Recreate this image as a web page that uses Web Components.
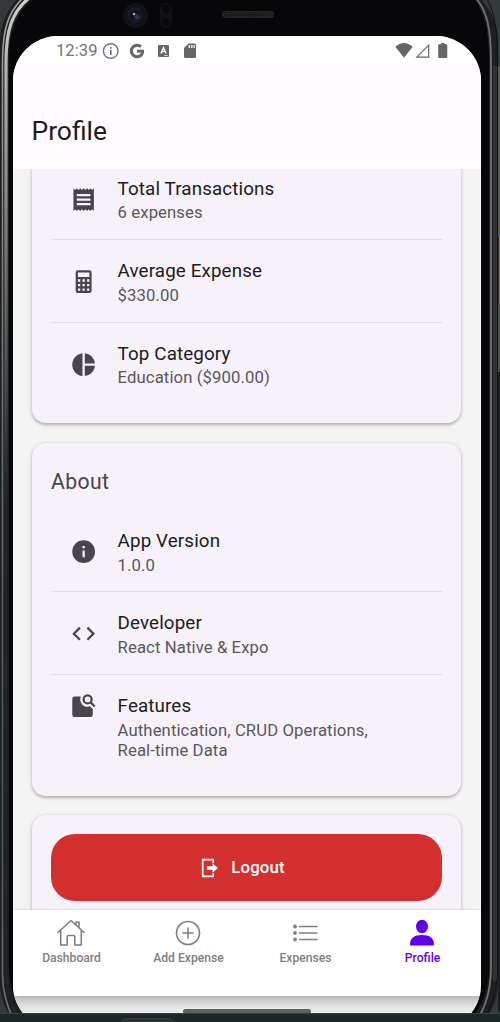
<!DOCTYPE html>
<html lang="en">
<head>
<meta charset="utf-8">
<title>Profile</title>
<style>
html,body{margin:0;padding:0;background:#343a3c;overflow:hidden}
body{width:500px;height:1022px;font-family:Roboto,"Noto Sans",sans-serif}
</style>
</head>
<body>
<phone-device>
  <status-bar></status-bar>
  <app-header>Profile</app-header>
  <scroll-view>
    <info-card style="--pt:0px;--h:265.5px;--mt:-11.5px">
      <list-row icon="receipt" heading="Total Transactions">6 expenses</list-row>
      <list-row icon="calculator" heading="Average Expense">$330.00</list-row>
      <list-row icon="pie" heading="Top Category" last>Education ($900.00)</list-row>
    </info-card>
    <info-card heading="About" style="--h:353px">
      <list-row icon="info" heading="App Version">1.0.0</list-row>
      <list-row icon="code" heading="Developer">React Native &amp; Expo</list-row>
      <list-row icon="search" heading="Features" last top>Authentication, CRUD Operations,<br>Real-time Data</list-row>
    </info-card>
    <info-card style="--h:140px">
      <logout-button>Logout</logout-button>
    </info-card>
  </scroll-view>
  <tab-bar>
    <tab-item icon="home">Dashboard</tab-item>
    <tab-item icon="add">Add Expense</tab-item>
    <tab-item icon="list">Expenses</tab-item>
    <tab-item icon="person" active>Profile</tab-item>
  </tab-bar>
  <gesture-bar></gesture-bar>
</phone-device>
<script>
const ICONS = {
  receipt: '<path d="M3,22L4.5,20.5L6,22L7.5,20.5L9,22L10.5,20.5L12,22L13.5,20.5L15,22L16.5,20.5L18,22L19.5,20.5L21,22V2L19.5,3.5L18,2L16.5,3.5L15,2L13.5,3.5L12,2L10.5,3.5L9,2L7.5,3.5L6,2L4.5,3.5L3,2M18,9H6V7H18M18,13H6V11H18M18,17H6V15H18V17Z"/>',
  calculator: '<path d="M7,2H17A2,2 0 0,1 19,4V20A2,2 0 0,1 17,22H7A2,2 0 0,1 5,20V4A2,2 0 0,1 7,2M7,4V8H17V4H7M7,10V12H9V10H7M11,10V12H13V10H11M15,10V12H17V10H15M7,14V16H9V14H7M11,14V16H13V14H11M15,14V16H17V14H15M7,18V20H9V18H7M11,18V20H13V18H11M15,18V20H17V18H15Z"/>',
  pie: '<path d="M11,2V22C5.9,21.5 2,17.2 2,12C2,6.8 5.9,2.5 11,2M13,2V11H22C21.5,6.2 17.8,2.5 13,2M13,13V22C17.7,21.5 21.5,17.8 22,13H13Z"/>',
  info: '<path d="M13,9H11V7H13M13,17H11V11H13M12,2A10,10 0 0,0 2,12A10,10 0 0,0 12,22A10,10 0 0,0 22,12A10,10 0 0,0 12,2Z"/>',
  code: '<path d="M14.6,16.6L19.2,12L14.6,7.4L16,6L22,12L16,18L14.6,16.6M9.4,16.6L4.8,12L9.4,7.4L8,6L2,12L8,18L9.4,16.6Z"/>',
  search: '<path d="M4,4H9.5A6.5,6.5 0 0 0 15.5,13A6.5,6.5 0 0 0 17.6,12.6L20,15V20A2,2 0 0 1 18,22H4A2,2 0 0 1 2,20V6A2,2 0 0 1 4,4Z"/><circle cx="15.5" cy="6.5" r="3.5" fill="none" stroke="currentColor" stroke-width="2"/><path d="M17.8,8.8L21.7,12.7" stroke="currentColor" stroke-width="2"/>'
};
function define(name, render) {
  customElements.define(name, class extends HTMLElement {
    connectedCallback() {
      if (this.shadowRoot) return;
      this.attachShadow({ mode: 'open' }).innerHTML = render(this);
    }
  });
}

define('phone-device', () => `
<style>
:host{position:relative;display:block;box-sizing:border-box;width:500px;height:1022px;padding:36px 19px 9px 13px;overflow:hidden}
.frame{position:absolute;left:0;top:0;z-index:0}
.clip{position:relative;height:977px;overflow:hidden}
.screen{width:468px;height:994px;border-radius:45px;overflow:hidden;display:flex;flex-direction:column;background:#f4f4f4}
</style>
<svg class="frame" width="500" height="1022" viewBox="0 0 500 1022">
  <defs><linearGradient id="metal" x1="0" y1="0" x2="0" y2="1"><stop offset="0" stop-color="#a0a2a2"/><stop offset=".3" stop-color="#777b7c"/><stop offset=".8" stop-color="#4b5356"/><stop offset="1" stop-color="#777"/></linearGradient>
  <linearGradient id="shine" x1="0" y1="0" x2="0" y2="1"><stop offset="0" stop-color="#cfcfcd"/><stop offset=".2" stop-color="#a8a8a6"/><stop offset=".5" stop-color="#777978"/><stop offset="1" stop-color="#1f2627"/></linearGradient>
  <pattern id="mesh" width="3" height="3" patternUnits="userSpaceOnUse"><rect width="3" height="3" fill="#262626"/><path d="M0 0L3 3M3 0L0 3" stroke="#111" stroke-width=".7"/></pattern></defs>
  <rect width="500" height="1022" fill="#343a3c"/>
  <rect x="498" y="67" width="2" height="170" fill="#5a5e5d"/>
  <rect x="499" y="237" width="1" height="67" fill="#c9573b"/>
  <rect x="498" y="304" width="2" height="68" fill="#4c504e"/>
  <rect x="498" y="372" width="2" height="640" fill="#1c2021"/>
  <rect x="0" y="-20" width="498" height="1064" rx="62" fill="#1d1f20"/>
  <rect x="493" y="66" width="4" height="915" fill="#303233"/>
  <path d="M23 -2C8 12 2.500 30 2.500 62V975Q3 1005 20 1030" fill="none" stroke="url(#metal)" stroke-width="1.600"/>
  <path d="M29 -2C12 12 6 30 6 62V500" fill="none" stroke="url(#shine)" stroke-width="3.200"/>
  <path d="M6 500V975Q8 1002 20 1018" fill="none" stroke="#1f2627" stroke-width="2"/>
  <path d="M476 -2C487 12 491 27 491 62V970Q490 1000 478 1018" fill="none" stroke="#727273" stroke-width="1.800"/>
  <path d="M486 -2C495 12 497.500 30 497.500 62V975Q496 1002 482 1022" fill="none" stroke="#111314" stroke-width="1"/>
  <path d="M32 0H475Q489 18 489 60V975Q486 1000 475 1014H24Q9 994 9 970V60Q9 18 32 0Z" fill="#070709"/>
  <circle cx="135.500" cy="15.500" r="12.500" fill="#111214"/><circle cx="135" cy="15" r="8" fill="#191a20"/><circle cx="135" cy="15" r="5" fill="#101420"/><circle cx="137" cy="17" r="2.500" fill="#303557"/><circle cx="134" cy="14" r="1.300" fill="#a0a6b8"/>
  <rect x="160" y="3" width="12" height="25" rx="6" fill="#121214"/><circle cx="166" cy="9" r="4" fill="#09090b"/><circle cx="166" cy="22" r="4" fill="#09090b"/>
  <rect x="222.500" y="11.500" width="51" height="6" rx="2" fill="url(#mesh)" stroke="#242424"/>
  <rect y="1013" width="500" height="9" fill="#1b2728"/><rect y="1013" width="500" height="1" fill="#38403f"/>
  <rect x="122.500" y="1018.500" width="50" height="10" rx="4" fill="#283032" stroke="#394143"/>
</svg>
<div class="clip"><div class="screen"><slot></slot></div></div>`);

define('status-bar', () => `
<style>
:host{display:flex;align-items:center;box-sizing:border-box;height:28px;flex:none;background:#fff;padding:0 33px 0 43px;color:#757575}
span{font-size:16.500px;line-height:28px;letter-spacing:.1px;width:46px;white-space:nowrap;padding-top:1px}
svg{display:block;fill:#666}
</style>
<span>12:39</span>
<svg width="104" height="28" viewBox="102 36 104 28"><circle cx="110.700" cy="51" r="7.300" fill="none" stroke="#757575" stroke-width="1.400"/><path d="M110 50h1.600v5H110zM110 47h1.600v1.700H110z"/>
<path d="M143.800 49.700H137v2.700h3.900c-.4 1.700-1.800 2.800-3.800 2.800a4.200 4.200 0 1 1 2.700-7.400l2.100-2.100a7.200 7.200 0 1 0-4.800 12.500c4 0 7-2.800 7-7 0-.5-.1-1-.3-1.500z"/>
<rect x="158" y="45" width="11" height="12" rx="1"/><path d="M161 53.500L163.500 47.500L166 53.500M162 51.500H165" fill="none" stroke="#fff" stroke-width="1.400"/><path d="M164.500 55.500h3" stroke="#fff" stroke-width=".8"/>
<path d="M188.500 43.500H194.500Q196 43.500 196 45V56.500Q196 58 194.500 58H185.500Q184 58 184 56.500V48Z"/><path d="M188.500 45h1.500v3h-1.500zM191 45h1.500v3H191zM193.400 45h1.400v3h-1.400z" fill="#eee"/></svg>
<svg style="margin-left:auto" width="54" height="28" viewBox="394 36 54 28"><path d="M404 57.800L395.300 46.700Q404 39.200 412.700 46.700Z"/><path d="M416.800 57.200H428.700V45.200Z" fill="none" stroke="#666" stroke-width="1.200"/><path d="M439 44.200H441V43h3.500v1.200h2q.8 0 .8.800V57.300q0 .8-.8.800H439q-.8 0-.8-.8V45q0-.8.8-.8Z"/></svg>`);

define('app-header', () => `
<style>
:host{display:flex;align-items:flex-end;box-sizing:border-box;height:105px;flex:none;background:#fffbff;padding:0 18.500px 22px;color:#1d1b1e;font-size:26.400px;line-height:32px}
</style><slot></slot>`);

define('scroll-view', () => `
<style>
:host{display:flex;flex-direction:column;gap:19.500px;height:741px;flex:none;box-sizing:border-box;overflow:hidden;background:#f4f4f4;padding:0 20px 0 19px}
</style><slot></slot>`);

define('info-card', el => `
<style>
:host{display:block;flex:none;box-sizing:border-box;height:var(--h);margin-top:var(--mt,0);padding:var(--pt,19px) 19px 0;border-radius:14px;background:#f7f2f9;box-shadow:0 1.500px 3px rgba(0,0,0,.22),0 1px 5px rgba(0,0,0,.1)}
h2{margin:0 0 11.600px;padding-top:4.800px;font-weight:400;font-size:21.200px;line-height:32px;letter-spacing:.4px;color:#49454f}
</style>${el.getAttribute('heading') ? `<h2>${el.getAttribute('heading')}</h2>` : ''}<slot></slot>`);

define('list-row', el => `
<style>
:host{display:flex;box-sizing:border-box;height:82.500px;padding:17px 0 0 19.300px;border-bottom:1px solid #e1dee4;color:#49454f}
:host([last]){border-bottom:0;height:auto}
svg{display:block;flex:none;width:27.300px;height:27.300px;margin-top:11px;fill:currentColor}
:host([top]) svg{margin-top:.5px}
.text{margin-left:20px;padding-top:1px;display:flex;flex-direction:column;white-space:nowrap}
.title{font-size:18.800px;line-height:27px;letter-spacing:.12px;color:#1d1b20}
.sub{margin-top:.7px;font-size:16.700px;line-height:20px;letter-spacing:.1px;color:#5a5660}
</style>
<svg viewBox="0 0 24 24">${ICONS[el.getAttribute('icon')]}</svg>
<div class="text"><div class="title">${el.getAttribute('heading')}</div><div class="sub"><slot></slot></div></div>`);

define('logout-button', () => `
<style>
:host{display:flex;align-items:center;justify-content:center;gap:12px;height:67px;box-sizing:border-box;padding-right:7px;border-radius:24px;background:#d32f2f;color:#fff;font-size:16.800px;font-weight:500;letter-spacing:.15px}
svg{display:block}
span{margin-top:-1px}
</style>
<svg width="18" height="20" viewBox="0 0 18 20"><path d="M12.200 5V1.700H1.700V18.300H12.200V15" fill="none" stroke="#fff" stroke-width="1.700" stroke-linejoin="round"/><path d="M5.800 8.300H11.500V5.200L17 10L11.500 14.800V11.700H5.800Z" fill="#fff"/></svg><span><slot></slot></span>`);

define('tab-bar', () => `
<style>
:host{display:flex;flex:none;box-sizing:border-box;position:relative;height:86px;background:#fff;box-shadow:0 0 2px rgba(0,0,0,.16),0 5px 8px rgba(0,0,0,.14);z-index:1}
</style><slot></slot>`);

const TABS = {
  home: '<path d="M2 14.500L15 2.500L28 14.500M4.700 12.500V27H11.200V18.800Q11.200 17.500 12.500 17.500H17.500Q18.800 17.500 18.800 18.800V27H25.300V12.500M20 7V4H23V9.500"/>',
  add: '<circle cx="15" cy="15" r="11.500"/><path d="M15 10V20M10 15H20"/>',
  list: '<path d="M9.500 8.500H27M9.500 15H27M9.500 21.500H27"/><g fill="currentColor" stroke="none"><circle cx="5" cy="8.500" r="1.900"/><circle cx="5" cy="15" r="1.900"/><circle cx="5" cy="21.500" r="1.900"/></g>',
  person: '<g fill="currentColor" stroke="none"><ellipse cx="15" cy="8.500" rx="6" ry="6.700"/><path d="M3 26.500Q3 17 15 17T27 26.500Q27 27.500 26 27.500H4Q3 27.500 3 26.500Z"/></g>'
};
define('tab-item', el => `
<style>
:host{display:flex;flex:1;flex-direction:column;align-items:center;color:#808080;padding-top:7.500px}
:host([active]){color:#6200ee}
svg{display:block;width:30px;height:30px;margin-right:1px;fill:none;stroke:currentColor;stroke-width:1.600;stroke-linecap:round;stroke-linejoin:round}
span{margin-top:2px;font-size:12.150px;font-weight:500;line-height:16px;white-space:nowrap}
</style>
<svg viewBox="0 0 30 30">${TABS[el.getAttribute('icon')]}</svg><span><slot></slot></span>`);

define('gesture-bar', () => `
<style>
:host{display:flex;justify-content:center;flex:1;background:linear-gradient(#d8d8d8,#ededed 18px);padding-top:12.500px;box-sizing:border-box}
i{display:block;width:128px;height:5px;border-radius:2.500px;background:#606060}
</style><i></i>`);
</script>
</body>
</html>
